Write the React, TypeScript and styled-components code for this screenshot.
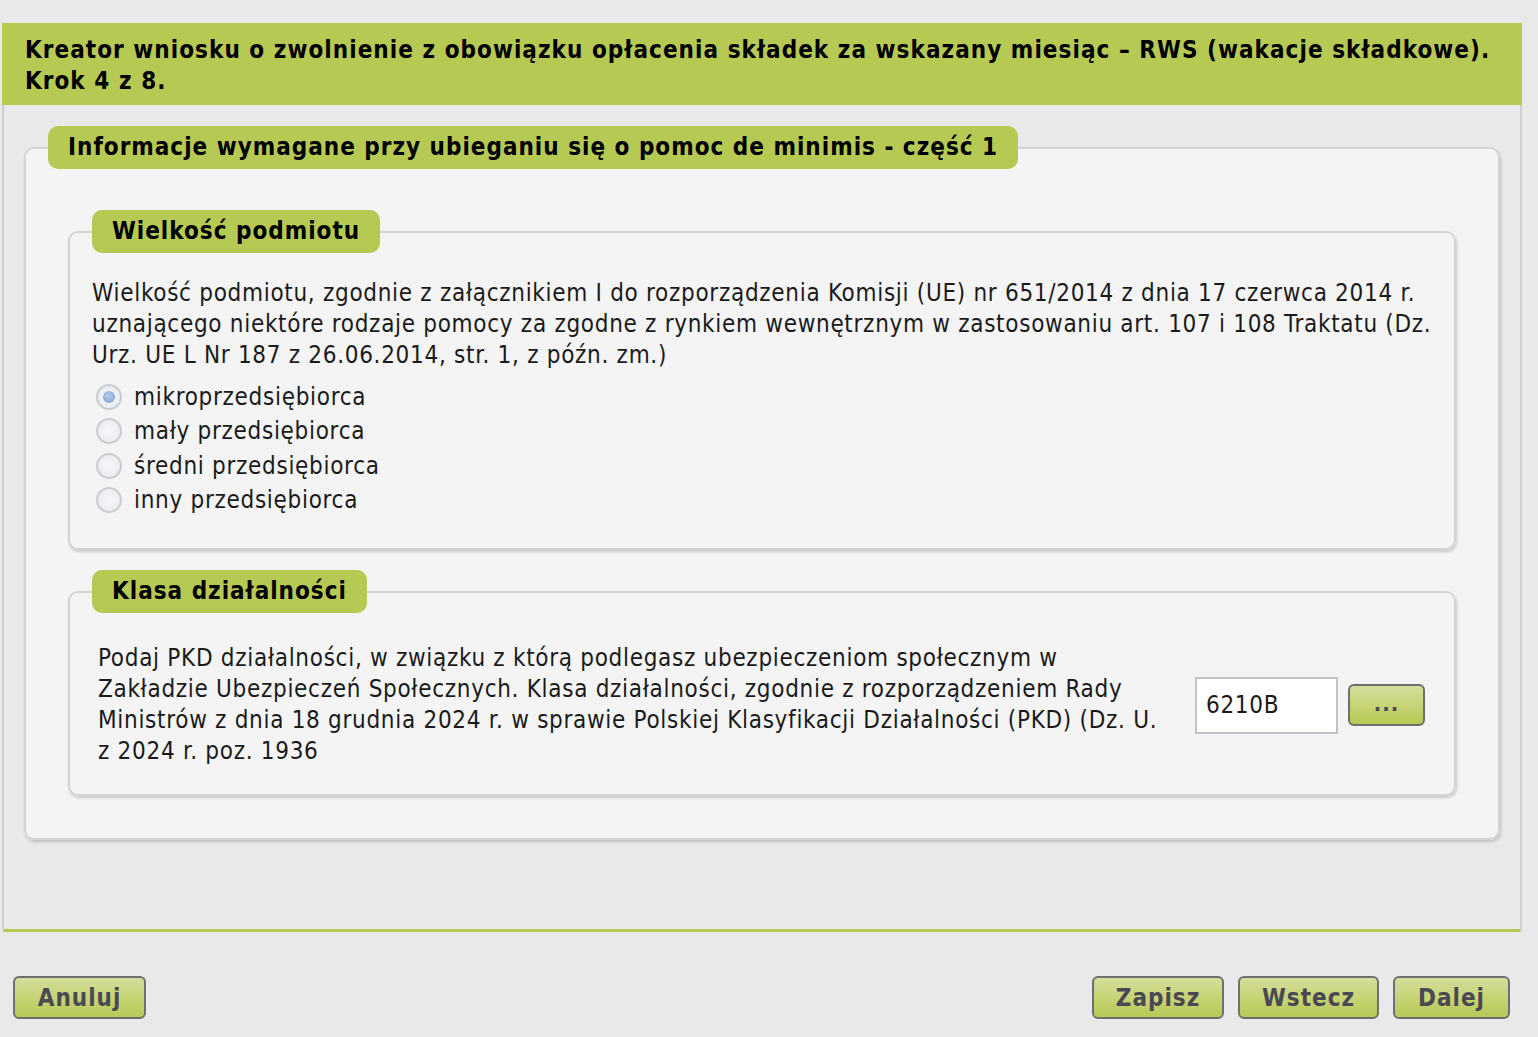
import React from "react";
import styled, { createGlobalStyle } from "styled-components";

const GREEN = "#b6c953";
const FONT = `"DejaVu Sans Condensed", "DejaVu Sans", Verdana, sans-serif`;

const Global = createGlobalStyle`
  html, body { margin: 0; padding: 0; background: #e9e9e9; }
  body { font-family: ${FONT}; color: #1a1a1a; }
  * { box-sizing: border-box; }
`;

const Page = styled.div`
  width: 1538px;
  height: 1037px;
  padding: 23px 16px 0 2px;
  display: flex;
  flex-direction: column;
`;

const Wizard = styled.section`
  width: 1520px;
  display: flex;
  flex-direction: column;
`;

const WizardHeader = styled.h1`
  margin: 0;
  background: ${GREEN};
  padding: 12px 23px 8px;
  font-size: 24px;
  line-height: 31px;
  font-weight: bold;
  letter-spacing: 1.05px;
  white-space: nowrap;
  color: #000;
`;

const WizardBody = styled.div`
  background: #e9e9e9;
  border-left: 2px solid #cfcfcf;
  border-right: 2px solid #cfcfcf;
  border-bottom: 3px solid ${GREEN};
  border-bottom-left-radius: 3px;
  border-bottom-right-radius: 3px;
  padding: 21px 20px 89px;
`;

const Box = styled.fieldset`
  margin: 0;
  min-width: 0;
  background: #f4f4f4;
  border: 2px solid #d3d3d3;
  border-radius: 10px;
  box-shadow: 1px 2px 3px rgba(0, 0, 0, 0.18);
  padding: 0;
`;

const Legend = styled.legend`
  margin-left: 22px;
  padding: 0 20px;
  height: 43px;
  line-height: 43px;
  background: ${GREEN};
  border-radius: 10px;
  font-size: 24px;
  font-weight: bold;
  letter-spacing: 1px;
  color: #000;
`;

const OuterBody = styled.div`
  padding: 41px 42px 42px;
  display: flex;
  flex-direction: column;
  gap: 20px;
`;

const SizeBody = styled.div`
  padding: 25px 22px 31px;
  display: flex;
  flex-direction: column;
  gap: 9px;
`;

const Text = styled.p`
  margin: 0;
  font-size: 24px;
  line-height: 31px;
  letter-spacing: 0.7px;
  white-space: nowrap;
  color: #1a1a1a;
`;

const RadioList = styled.div`
  display: flex;
  flex-direction: column;
`;

const RadioRow = styled.label`
  display: flex;
  align-items: center;
  gap: 12px;
  height: 34.3px;
  padding-left: 4px;
  font-size: 24px;
  letter-spacing: 0.7px;
  color: #1a1a1a;
`;

const RadioDot = styled.span<{ $checked?: boolean }>`
  width: 26px;
  height: 26px;
  border-radius: 50%;
  border: 2px solid #c9ccd3;
  background: radial-gradient(circle at 50% 50%, #f6f7f9 0%, #eceef2 60%, #dfe2e8 100%);
  display: flex;
  align-items: center;
  justify-content: center;
  flex: none;
  &::after {
    content: "";
    width: 12px;
    height: 12px;
    border-radius: 50%;
    display: ${(p) => (p.$checked ? "block" : "none")};
    background: radial-gradient(circle at 45% 40%, #b9cde6 0%, #8fb0d8 60%, #7a9ccb 100%);
  }
`;

const PkdRow = styled.div`
  padding: 30px 22px 27px 28px;
  display: flex;
  align-items: center;
`;

const PkdText = styled(Text)`
  width: 1080px;
  flex: none;
  margin-right: 17px;
`;

const PkdInput = styled.input`
  width: 143px;
  height: 57px;
  border: 2px solid #c0c3cc;
  background: #fff;
  font-family: ${FONT};
  font-size: 24px;
  letter-spacing: 0.7px;
  padding: 0 9px;
  color: #1a1a1a;
  outline: none;
  margin-right: 10px;
`;

const GreenButton = styled.button<{ $w: number }>`
  width: ${(p) => p.$w}px;
  height: 43px;
  border: 2px solid #6f6f6f;
  border-radius: 6px;
  background: linear-gradient(to bottom, #d4dd9c 0%, #c6d476 50%, #b7c955 100%);
  font-family: ${FONT};
  font-size: 24px;
  font-weight: bold;
  letter-spacing: 1px;
  color: #4a4853;
  padding: 0;
  cursor: pointer;
`;

const DotsButton = styled(GreenButton)`
  height: 42px;
  font-size: 22px;
  line-height: 1;
  padding-bottom: 2px;
`;

const Footer = styled.div`
  margin-top: 44px;
  padding: 0 12px 0 11px;
  display: flex;
  align-items: center;
  gap: 14px;
`;

const Spacer = styled.div`
  flex: 1;
`;

export default function App() {
  return (
    <>
      <Global />
      <Page>
        <Wizard>
          <WizardHeader>
            Kreator wniosku o zwolnienie z obowiązku opłacenia składek za wskazany miesiąc – RWS (wakacje składkowe).
            <br />
            Krok 4 z 8.
          </WizardHeader>
          <WizardBody>
            <Box>
              <Legend>Informacje wymagane przy ubieganiu się o pomoc de minimis - część 1</Legend>
              <OuterBody>
                <Box>
                  <Legend>Wielkość podmiotu</Legend>
                  <SizeBody>
                    <Text>
                      Wielkość podmiotu, zgodnie z załącznikiem I do rozporządzenia Komisji (UE) nr 651/2014 z dnia 17 czerwca 2014 r.
                      <br />
                      uznającego niektóre rodzaje pomocy za zgodne z rynkiem wewnętrznym w zastosowaniu art. 107 i 108 Traktatu (Dz.
                      <br />
                      Urz. UE L Nr 187 z 26.06.2014, str. 1, z późn. zm.)
                    </Text>
                    <RadioList>
                      <RadioRow>
                        <RadioDot $checked />
                        mikroprzedsiębiorca
                      </RadioRow>
                      <RadioRow>
                        <RadioDot />
                        mały przedsiębiorca
                      </RadioRow>
                      <RadioRow>
                        <RadioDot />
                        średni przedsiębiorca
                      </RadioRow>
                      <RadioRow>
                        <RadioDot />
                        inny przedsiębiorca
                      </RadioRow>
                    </RadioList>
                  </SizeBody>
                </Box>
                <Box>
                  <Legend>Klasa działalności</Legend>
                  <PkdRow>
                    <PkdText>
                      Podaj PKD działalności, w związku z którą podlegasz ubezpieczeniom społecznym w
                      <br />
                      Zakładzie Ubezpieczeń Społecznych. Klasa działalności, zgodnie z rozporządzeniem Rady
                      <br />
                      Ministrów z dnia 18 grudnia 2024 r. w sprawie Polskiej Klasyfikacji Działalności (PKD) (Dz. U.
                      <br />
                      z 2024 r. poz. 1936
                    </PkdText>
                    <PkdInput defaultValue="6210B" />
                    <DotsButton $w={77}>...</DotsButton>
                  </PkdRow>
                </Box>
              </OuterBody>
            </Box>
          </WizardBody>
        </Wizard>
        <Footer>
          <GreenButton $w={133}>Anuluj</GreenButton>
          <Spacer />
          <GreenButton $w={132}>Zapisz</GreenButton>
          <GreenButton $w={141}>Wstecz</GreenButton>
          <GreenButton $w={117}>Dalej</GreenButton>
        </Footer>
      </Page>
    </>
  );
}
